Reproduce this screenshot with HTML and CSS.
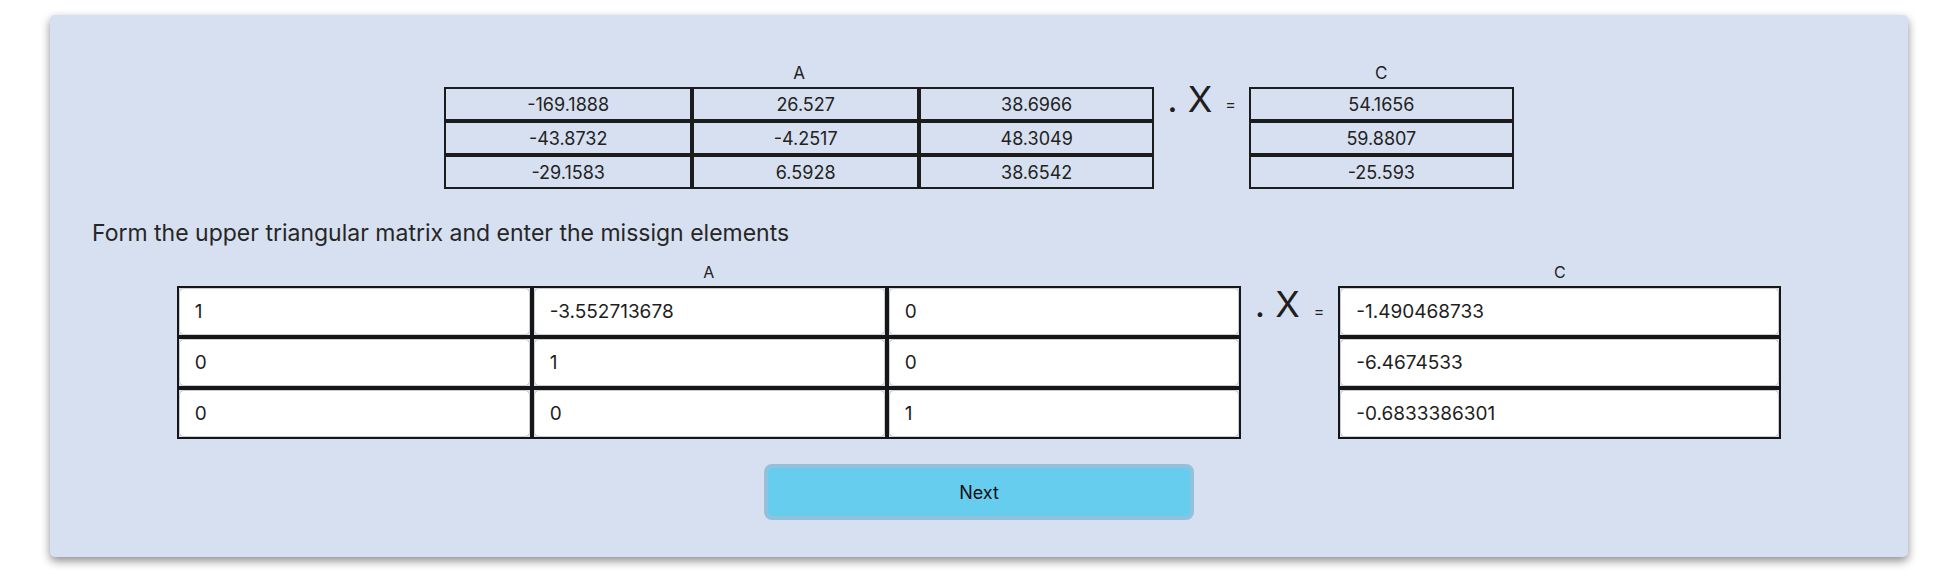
FILE: index.html
```html
<!DOCTYPE html>
<html>
<head>
<meta charset="utf-8">
<link rel="stylesheet" href="styles.css">
</head>
<body>
<div class="card">
  <div class="eq eq-top">
    <div class="matrix">
      <div class="label">A</div>
      <div class="grid grid-a-top">
        <div class="cell">-169.1888</div><div class="cell">26.527</div><div class="cell">38.6966</div>
        <div class="cell">-43.8732</div><div class="cell">-4.2517</div><div class="cell">48.3049</div>
        <div class="cell">-29.1583</div><div class="cell">6.5928</div><div class="cell">38.6542</div>
      </div>
    </div>
    <div class="ops ops-top">
      <span class="x">. X</span>
      <span class="equals">=</span>
    </div>
    <div class="matrix">
      <div class="label">C</div>
      <div class="grid grid-c-top">
        <div class="cell">54.1656</div>
        <div class="cell">59.8807</div>
        <div class="cell">-25.593</div>
      </div>
    </div>
  </div>

  <p class="prompt">Form the upper triangular matrix and enter the missign elements</p>

  <div class="eq eq-bottom">
    <div class="matrix">
      <div class="label label-sm">A</div>
      <div class="grid grid-a-bot">
        <div class="icell"><input class="inp" type="text" value="1"></div>
        <div class="icell"><input class="inp" type="text" value="-3.552713678"></div>
        <div class="icell"><input class="inp" type="text" value="0"></div>
        <div class="icell"><input class="inp" type="text" value="0"></div>
        <div class="icell"><input class="inp" type="text" value="1"></div>
        <div class="icell"><input class="inp" type="text" value="0"></div>
        <div class="icell"><input class="inp" type="text" value="0"></div>
        <div class="icell"><input class="inp" type="text" value="0"></div>
        <div class="icell"><input class="inp" type="text" value="1"></div>
      </div>
    </div>
    <div class="ops ops-bot">
      <span class="x">. X</span>
      <span class="equals">=</span>
    </div>
    <div class="matrix">
      <div class="label label-sm">C</div>
      <div class="grid grid-c-bot">
        <div class="icell"><input class="inp" type="text" value="-1.490468733"></div>
        <div class="icell"><input class="inp" type="text" value="-6.4674533"></div>
        <div class="icell"><input class="inp" type="text" value="-0.6833386301"></div>
      </div>
    </div>
  </div>

  <div class="actions">
    <button class="next" type="button">Next</button>
  </div>
</div>
</body>
</html>
```

FILE: styles.css
```css
* { box-sizing: border-box; }

html, body {
  margin: 0;
  padding: 0;
  background: #ffffff;
  font-family: Inter, "Noto Sans", "Liberation Sans", sans-serif;
  color: #222;
}

.card {
  margin: 15px 36px 21px 50px;
  background: #d7e0f0;
  border-radius: 5px;
  box-shadow: 0 4px 10px rgba(0, 0, 0, 0.45);
  padding: 48px 42px 37px 42px;
  display: flex;
  flex-direction: column;
}

.eq {
  display: flex;
  justify-content: center;
  align-items: flex-start;
}

.matrix {
  display: flex;
  flex-direction: column;
}

.label {
  text-align: center;
  font-size: 17px;
  line-height: 20px;
  height: 24px;
  color: #222;
}

.label-sm {
  font-size: 16px;
}

.grid {
  display: grid;
}

.grid-a-top {
  grid-template-columns: 248px 227px 235px;
  grid-auto-rows: 34px;
}

.grid-c-top {
  grid-template-columns: 265px;
  grid-auto-rows: 34px;
}

.cell {
  border: 2px solid #1c1c1c;
  display: flex;
  align-items: center;
  justify-content: center;
  font-size: 18px;
  color: #222;
}

.grid-a-bot {
  grid-template-columns: 355px 355px 354px;
  grid-auto-rows: 51px;
}

.grid-c-bot {
  grid-template-columns: 443px;
  grid-auto-rows: 51px;
}

.icell {
  border: 2px solid #161616;
  padding: 0;
  display: flex;
}

.inp {
  width: 100%;
  height: 100%;
  margin: 0;
  border: 1px solid #c9ccd2;
  border-radius: 5px;
  background: #ffffff;
  padding: 0 0 0 15px;
  font-family: Inter, "Noto Sans", "Liberation Sans", sans-serif;
  font-size: 19px;
  color: #1e1e1e;
  outline: none;
}

.ops {
  display: flex;
  align-items: flex-start;
  margin-top: 24px;
}

.x {
  font-size: 36px;
  line-height: 36px;
  color: #1e1e1e;
  white-space: pre;
}

.equals {
  font-size: 16px;
  color: #222;
}

.ops-top { padding: 0 13px; gap: 13px; }
.ops-top .x { margin-top: -6px; }
.ops-top .equals { line-height: 34px; }

.ops-bot { padding: 0 14px; gap: 14px; }
.ops-bot .x { margin-top: 0; }
.ops-bot .equals { line-height: 51px; }

.prompt {
  margin: 30px 0 15px 0;
  font-size: 23px;
  line-height: 28px;
  color: #262626;
}

.actions {
  display: flex;
  justify-content: center;
  margin-top: 25px;
}

.next {
  width: 430px;
  height: 56px;
  border: 4px solid #93c1db;
  border-radius: 8px;
  background: #67cdee;
  font-family: Inter, "Noto Sans", "Liberation Sans", sans-serif;
  font-size: 18px;
  color: #111;
  cursor: pointer;
}
```
